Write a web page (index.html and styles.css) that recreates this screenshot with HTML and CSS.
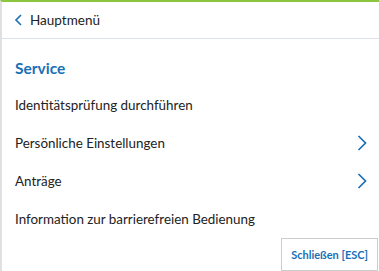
FILE: index.html
```html
<!DOCTYPE html>
<html lang="de">
<head>
  <meta charset="UTF-8" />
  <title>Menü</title>
  <link rel="stylesheet" href="styles.css">
</head>
<body>
  <div class="panel">
    <div class="panel-head">
      <svg class="chev" width="8" height="12" viewBox="0 0 8 12"><path d="M7 1 L2 6 L7 11" fill="none" stroke="currentColor" stroke-width="1.6"/></svg>
      <span>Hauptmenü</span>
    </div>
    <div class="panel-body">
      <h2 class="section-title">Service</h2>
      <ul class="menu">
        <li class="menu-item">Identitätsprüfung durchführen</li>
        <li class="menu-item">Persönliche Einstellungen<svg class="chev" width="10" height="16" viewBox="0 0 10 16"><path d="M1.5 1 L8.5 8 L1.5 15" fill="none" stroke="currentColor" stroke-width="1.7"/></svg></li>
        <li class="menu-item">Anträge<svg class="chev" width="10" height="16" viewBox="0 0 10 16"><path d="M1.5 1 L8.5 8 L1.5 15" fill="none" stroke="currentColor" stroke-width="1.7"/></svg></li>
        <li class="menu-item">Information zur barrierefreien Bedienung</li>
      </ul>
      <div class="foot"><button class="close-btn">Schließen [ESC]</button></div>
    </div>
  </div>
</body>
</html>
```
FILE: styles.css
```css
html,body{margin:0;padding:0;height:100%;background:#fff;font-family:Lato,'Noto Sans',sans-serif;color:#222}
.panel{height:100%;box-sizing:border-box;border-top:2px solid #8cc63f;border-left:2px solid #e0e0e0;display:flex;flex-direction:column}
.panel-head{height:39px;display:flex;align-items:center;gap:8px;padding:0 12px;font-size:13.5px;border-bottom:1px solid #dde3e8}
.panel-head .chev{color:#1a6fb5}
.panel-body{padding:0 14px 0 13px;flex:1;display:flex;flex-direction:column}
.section-title{margin:19px 0 0;font-size:15.5px;font-weight:700;color:#1a6fb5;line-height:20px}
.menu{list-style:none;margin:8px 0 0;padding:0}
.menu-item{height:38px;display:flex;align-items:center;justify-content:space-between;font-size:13.4px}
.menu-item .chev{color:#1a6fb5;margin-right:-2px}
.foot{display:flex;justify-content:flex-end;margin-top:0}
.close-btn{font-family:inherit;font-size:11px;font-weight:700;color:#1a6fb5;background:#fff;border:1px solid #ccc;padding:0 9px;height:33px;white-space:nowrap;margin-right:-13px}
```
